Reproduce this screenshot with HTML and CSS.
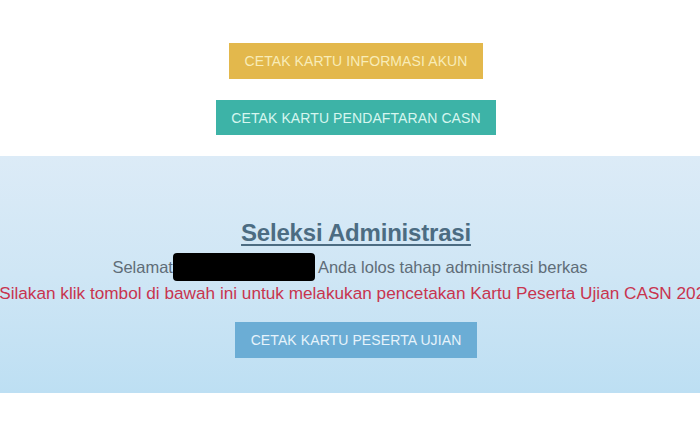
FILE: index.html
```html
<!DOCTYPE html>
<html lang="id">
<head>
<meta charset="utf-8">
<title>Seleksi Administrasi</title>
<link rel="stylesheet" href="styles.css">
</head>
<body>
<div class="top">
  <a class="btn btn-gold">CETAK KARTU INFORMASI AKUN</a>
  <a class="btn btn-teal">CETAK KARTU PENDAFTARAN CASN</a>
</div>
<section class="panel">
  <h2 class="title">Seleksi Administrasi</h2>
  <p class="greet">Selamat<span class="redact"></span>Anda lolos tahap administrasi berkas</p>
  <div class="notice-wrap"><p class="notice">Silakan klik tombol di bawah ini untuk melakukan pencetakan Kartu Peserta Ujian CASN 2021</p></div>
  <a class="btn btn-blue">CETAK KARTU PESERTA UJIAN</a>
</section>
</body>
</html>
```
FILE: styles.css
```css
* { box-sizing: border-box; }
html, body { margin: 0; padding: 0; }
body {
  width: 700px;
  height: 428px;
  overflow: hidden;
  background: #ffffff;
  font-family: "Liberation Sans", Arial, sans-serif;
}
.top {
  display: flex;
  flex-direction: column;
  align-items: center;
  padding-top: 43px;
  gap: 21px;
  height: 156px;
}
.btn {
  display: flex;
  align-items: center;
  justify-content: center;
  font-size: 14px;
  letter-spacing: 0.1px;
  text-decoration: none;
  white-space: nowrap;
  margin-left: 12px;
}
.btn-gold {
  width: 254px;
  height: 36px;
  background: #e3b84c;
  color: #f8ecb8;
}
.btn-teal {
  width: 280px;
  height: 35px;
  background: #3db3a7;
  color: #d6f6ef;
}
.panel {
  height: 237px;
  background: linear-gradient(180deg, #dcebf7 0%, #cfe6f5 50%, #bddff3 100%);
  display: flex;
  flex-direction: column;
  align-items: center;
  padding-top: 62px;
}
.title {
  margin: 0 0 0 12px;
  font-size: 24px;
  font-weight: bold;
  color: #4c6c82;
  text-decoration: underline;
  text-underline-offset: 3px;
  text-decoration-thickness: 2px;
  letter-spacing: -0.2px;
  line-height: 30px;
}
.greet {
  margin: 5px 0 0 0;
  font-size: 16.5px;
  color: #5f6d78;
  display: flex;
  align-items: center;
  line-height: 28px;
}
.redact {
  display: inline-block;
  width: 142px;
  height: 28px;
  background: #000;
  border-radius: 4px;
  margin: 0 3px 0 0;
}
.notice-wrap {
  width: 700px;
  display: flex;
  justify-content: center;
  overflow: hidden;
}
.notice {
  margin: 1px 0 0 0;
  flex: none;
  white-space: nowrap;
  font-size: 17.2px;
  color: #c8344f;
  line-height: 22px;
  padding-left: 14px;
}
.btn-blue {
  margin-top: 18px;
  width: 242px;
  height: 36px;
  background: #6badd5;
  color: #e6f3fb;
}
```
